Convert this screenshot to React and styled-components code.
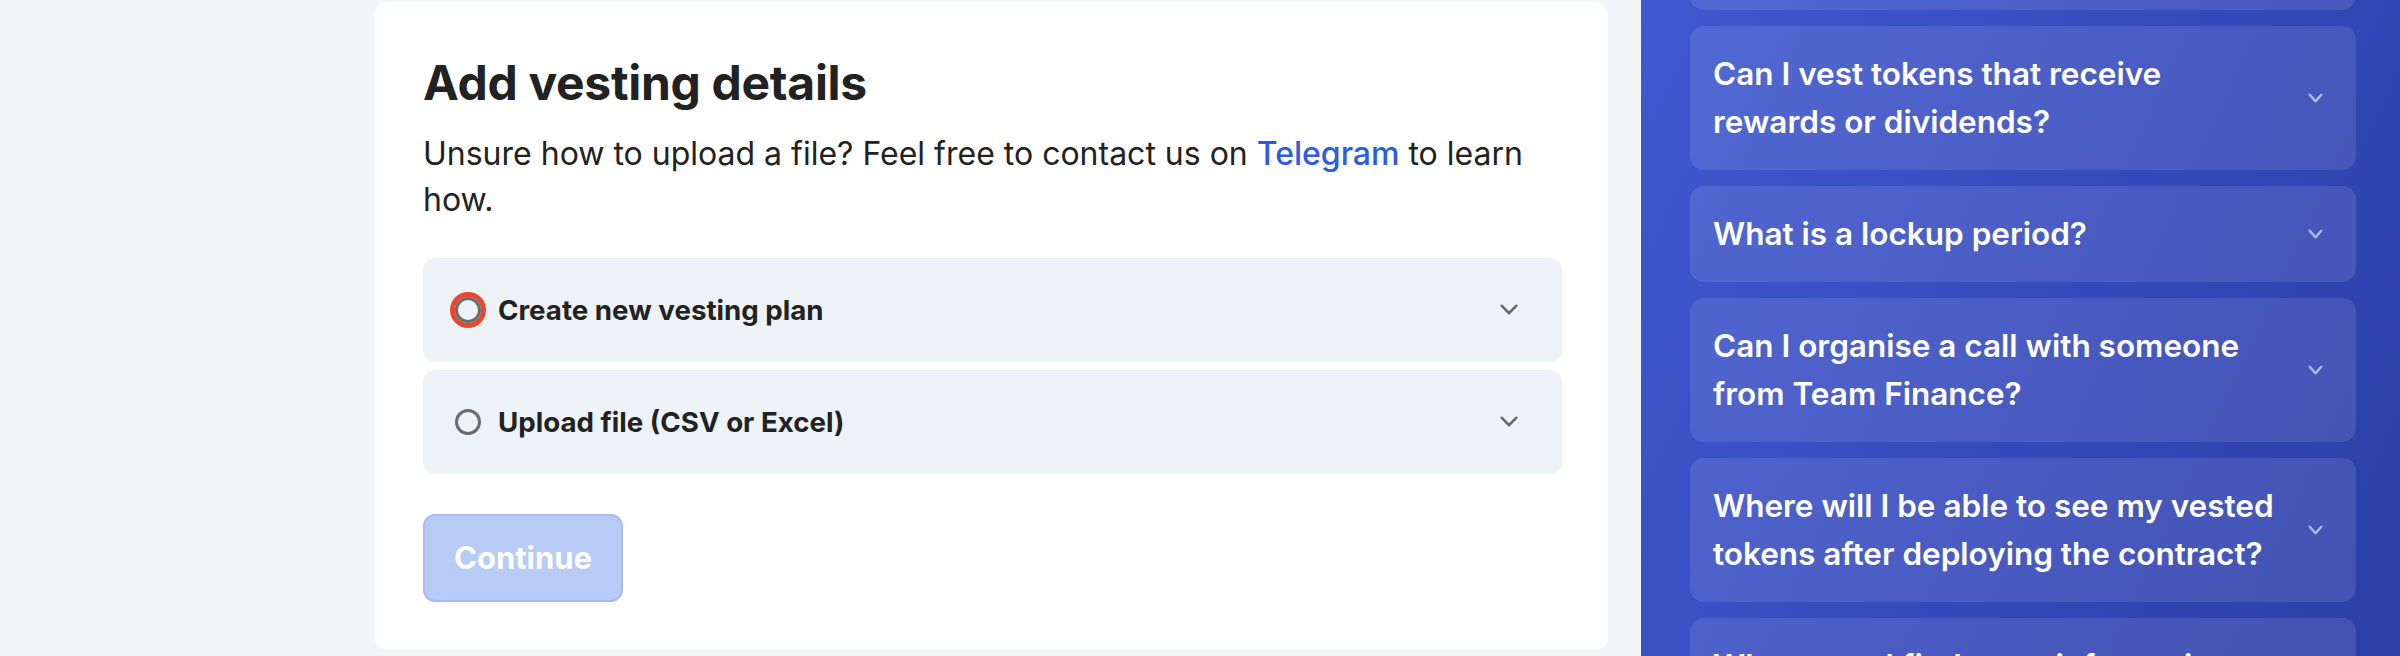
import React from "react";
import styled, { createGlobalStyle } from "styled-components";

const Global = createGlobalStyle`
  html, body { margin: 0; padding: 0; }
  body {
    background: #f3f6f9;
    font-family: "Inter", "Noto Sans", sans-serif;
    color: #222;
    overflow: hidden;
  }
`;

const Page = styled.div`
  display: grid;
  grid-template-columns: 1641px 1fr;
  height: 656px;
  overflow: hidden;
`;

const Main = styled.main`
  padding: 2px 33px 0 374px;
`;

const Card = styled.section`
  background: #fff;
  border-radius: 14px;
  padding: 52px 46px 48px 49px;
  display: flex;
  flex-direction: column;
`;

const Title = styled.h1`
  margin: 0;
  font-size: 48px;
  line-height: 57.6px;
  font-weight: 700;
  letter-spacing: -0.3px;
  color: #222;
`;

const Lead = styled.p`
  margin: 19px 0 0;
  font-size: 32px;
  line-height: 46px;
  font-weight: 400;
  color: #222;
`;

const Link = styled.a`
  color: #2d5be3;
  font-weight: 500;
  text-decoration: none;
`;

const Options = styled.div`
  margin-top: 35px;
  display: flex;
  flex-direction: column;
  gap: 8px;
`;

const Option = styled.div`
  height: 104px;
  background: #edf2f7;
  border-radius: 12px;
  display: flex;
  align-items: center;
  padding: 0 44px 0 32px;
`;

const Radio = styled.span`
  width: 26px;
  height: 26px;
  box-sizing: border-box;
  border-radius: 50%;
  border: 3.5px solid #6b6b6b;
  flex: none;
  box-shadow: ${(p) => (p.$focused ? "0 0 0 5px #e8472d" : "none")};
`;

const OptionLabel = styled.span`
  margin-left: 17px;
  font-size: 27.7px;
  font-weight: 700;
  color: #222;
  flex: 1;
`;

const Chevron = ({ color, w = 18, h = 10, sw = 2.6 }) => (
  <svg width={w} height={h + 2} viewBox={`0 0 ${w} ${h + 2}`} fill="none">
    <path
      d={`M${sw / 2 + 0.5} ${sw / 2 + 0.5} L${w / 2} ${h - sw / 2 + 0.5} L${w - sw / 2 - 0.5} ${sw / 2 + 0.5}`}
      stroke={color}
      strokeWidth={sw}
      strokeLinecap="round"
      strokeLinejoin="round"
    />
  </svg>
);

const Actions = styled.div`
  margin-top: 40px;
`;

const Button = styled.button`
  width: 200px;
  height: 88px;
  box-sizing: border-box;
  background: #b7cbf6;
  border: 2px solid #a6bbf2;
  border-radius: 12px;
  color: #fff;
  font-family: "Inter", sans-serif;
  font-size: 31px;
  font-weight: 700;
  cursor: not-allowed;
`;

const Side = styled.aside`
  background: linear-gradient(115deg, #4059d0 0%, #3549bb 55%, #2c3fa6 100%);
  overflow: hidden;
  padding: 0 44px 0 49px;
`;

const FaqList = styled.div`
  margin-top: -86px;
  display: flex;
  flex-direction: column;
  gap: 16px;
`;

const FaqItem = styled.div`
  background: rgba(255, 255, 255, 0.1);
  border-radius: 14px;
  padding: 24px 33px 24px 23px;
  display: flex;
  align-items: center;
  gap: 24px;
  flex: none;
`;

const FaqText = styled.span`
  flex: 1;
  color: #fff;
  font-size: 31.5px;
  line-height: 48px;
  font-weight: 600;
`;

const faqs = [
  "How does token vesting work?",
  <>Can I vest tokens that receive<br />rewards or dividends?</>,
  "What is a lockup period?",
  <>Can I organise a call with someone<br />from Team Finance?</>,
  <>Where will I be able to see my vested<br />tokens after deploying the contract?</>,
  <>Where can I find more information<br />about vesting?</>,
];

export default function App() {
  return (
    <>
      <Global />
      <Page>
        <Main>
          <Card>
            <Title>Add vesting details</Title>
            <Lead>
              Unsure how to upload a file? Feel free to contact us on{" "}
              <Link href="#">Telegram</Link> to learn how.
            </Lead>
            <Options>
              <Option>
                <Radio $focused />
                <OptionLabel>Create new vesting plan</OptionLabel>
                <Chevron color="#666" />
              </Option>
              <Option>
                <Radio />
                <OptionLabel>Upload file (CSV or Excel)</OptionLabel>
                <Chevron color="#666" />
              </Option>
            </Options>
            <Actions>
              <Button disabled>Continue</Button>
            </Actions>
          </Card>
        </Main>
        <Side>
          <FaqList>
            {faqs.map((q, i) => (
              <FaqItem key={i}>
                <FaqText>{q}</FaqText>
                <Chevron color="rgba(255,255,255,0.6)" w={15} h={9} sw={2.4} />
              </FaqItem>
            ))}
          </FaqList>
        </Side>
      </Page>
    </>
  );
}
